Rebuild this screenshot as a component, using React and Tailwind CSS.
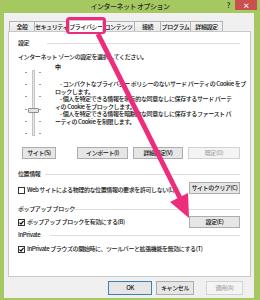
import React from "react";

function Header({ label, labelClass }) {
  return (
    <div className="flex items-center h-[8px] whitespace-nowrap">
      <div className={labelClass}>{label}</div>
      <div className="flex-1 h-px bg-[#dcdcdc]" />
    </div>
  );
}

function Check({ checked }) {
  return (
    <div className="w-[7px] h-[7px] border border-[#333] bg-white flex items-center justify-center shrink-0">
      {checked && (
        <svg width="5" height="5" viewBox="0 0 5 5">
          <path d="M0.5 2.6 L2 4 L4.6 0.8" fill="none" stroke="#111" strokeWidth="1.2" />
        </svg>
      )}
    </div>
  );
}

function Btn({ children, className, disabled, primary }) {
  const border = primary ? "border-[#3c7fb1]" : disabled ? "border-[#d2d2d2]" : "border-[#adadad]";
  const bg = disabled ? "bg-[#f4f4f4]" : "bg-[#e6e6e6]";
  const color = disabled ? "text-[#a8a8a8]" : "text-[#111]";
  return (
    <div className={`${className} ${border} ${bg} ${color} border flex items-center justify-center whitespace-nowrap shrink-0`}>
      {children}
    </div>
  );
}

function Tab({ label, className, active }) {
  if (active) {
    return (
      <div className={`${className} h-[12px] bg-white border border-b-0 border-[#c8c8c8] relative z-10 mb-[-1px] flex items-center justify-center whitespace-nowrap overflow-hidden`}>
        {label}
      </div>
    );
  }
  return (
    <div className={`${className} h-[10px] bg-linear-to-b from-[#f4f4f4] to-[#e9e9e9] border border-b-0 border-[#b4b4b4] -ml-px flex items-center justify-center whitespace-nowrap overflow-hidden`}>
      {label}
    </div>
  );
}

function CheckRow({ checked, label }) {
  return (
    <div className="flex items-center h-[8px] gap-[2px] whitespace-nowrap">
      <Check checked={checked} />
      <span>{label}</span>
    </div>
  );
}

export default function App() {
  const ticks = [0, 1, 2, 3, 4, 5];
  return (
    <div className="relative w-[260px] h-[300px] bg-[#a5c860] flex flex-col overflow-hidden font-['Noto_Sans_CJK_JP','Noto_Sans',sans-serif] font-medium text-[6px] leading-[8px] tracking-[-0.4px] text-[#111]">
      {/* title bar */}
      <div className="h-[13px] grid grid-cols-[1fr_auto_1fr] shrink-0">
        <div />
        <div className="text-[7px] leading-[13px] tracking-[-0.5px] text-[#2b2b2b] whitespace-nowrap">
          インターネット オプション
        </div>
        <div className="flex justify-end items-start pr-[3px]">
          <span className="text-[7px] leading-[11px] font-bold text-[#333] mr-[5px]">?</span>
          <div className="w-[22px] h-[10px] bg-[#c9504f] flex items-center justify-center text-white text-[7px] leading-[10px] font-bold">
            ×
          </div>
        </div>
      </div>

      {/* client area */}
      <div className="flex-1 ml-[4px] mr-[6px] mb-[2px] bg-[#f0f0f0] flex flex-col pl-[4px] pr-[3px]">
        {/* tabs */}
        <div className="mt-[6px] h-[12px] flex items-end pl-[2px]">
          <Tab label="全般" className="w-[26px]" />
          <Tab label="セキュリティ" className="w-[35px]" />
          <Tab label="プライバシー" className="w-[34px]" active />
          <Tab label="コンテンツ" className="w-[33px]" />
          <Tab label="接続" className="w-[27px]" />
          <Tab label="プログラム" className="w-[31px]" />
          <Tab label="詳細設定" className="w-[33px]" />
        </div>

        {/* panel */}
        <div className="h-[246px] border border-[#c8c8c8] bg-white flex flex-col pl-[9px] pr-[10px]">
          <div className="mt-[7px]">
            <Header label="設定" labelClass="w-[29px]" />
          </div>
          <div className="mt-[6px] h-[8px] whitespace-nowrap">インターネット ゾーンの設定を選択してください。</div>

          {/* slider + description */}
          <div className="mt-[2px] flex">
            <div className="w-[37px] shrink-0 pt-[7px] pl-[7px] flex">
              <div className="h-[66px] py-[2px] flex flex-col justify-between">
                {ticks.map((t) => (
                  <div key={t} className="w-[2px] h-px bg-[#9a9a9a]" />
                ))}
              </div>
              <div className="ml-[5px] w-[3px] h-[66px] border border-[#c4c4c4] bg-[#e8e8e8] relative">
                <div className="absolute left-[-5px] top-[37px] w-[11px] h-[5px] bg-[#e2e2e2] border border-[#8f8f8f] rounded-[1px]" />
              </div>
              <div className="ml-[4px] h-[66px] py-[2px] flex flex-col justify-between">
                {ticks.map((t) => (
                  <div key={t} className="w-[2px] h-px bg-[#9a9a9a]" />
                ))}
              </div>
            </div>
            <div className="flex flex-col whitespace-nowrap">
              <div className="h-[8px] font-bold">中</div>
              <div className="mt-[9px] leading-[7.6px]">
                <div className="pl-[5px]">- コンパクトなプライバシー ポリシーのないサード パーティの Cookie をブ</div>
                <div>ロックします。</div>
                <div className="pl-[5px]">- 個人を特定できる情報を明示的な同意なしに保存するサード パーテ</div>
                <div>ィの Cookie をブロックします。</div>
                <div className="pl-[5px]">- 個人を特定できる情報を暗黙的な同意なしに保存するファースト パ</div>
                <div>ーティの Cookie を制限します。</div>
              </div>
            </div>
          </div>

          {/* buttons row */}
          <div className="mt-[11px] h-[12px] flex">
            <Btn className="ml-[4px] w-[34px] h-[12px]">サイト(S)</Btn>
            <Btn className="ml-[21px] w-[51px] h-[12px]">インポート(I)</Btn>
            <Btn className="ml-[5px] w-[50px] h-[12px]">詳細設定(V)</Btn>
            <Btn className="ml-[5px] w-[52px] h-[12px]" disabled>既定(D)</Btn>
          </div>

          <div className="mt-[11px]">
            <Header label="位置情報" labelClass="w-[27px]" />
          </div>
          <div className="mt-[4px] h-[12px] flex justify-between">
            <div className="mt-[4px]">
              <CheckRow label="Web サイトによる物理的な位置情報の要求を許可しない(L)" />
            </div>
            <Btn className="w-[51px] h-[12px]">サイトのクリア(C)</Btn>
          </div>

          <div className="mt-[11px]">
            <Header label="ポップアップ ブロック" labelClass="w-[48px]" />
          </div>
          <div className="mt-[3px] h-[12px] flex justify-between">
            <div className="mt-[2px]">
              <CheckRow checked label="ポップアップ ブロックを有効にする(B)" />
            </div>
            <Btn className="w-[51px] h-[12px]">設定(E)</Btn>
          </div>

          <div className="mt-[3px]">
            <Header label="InPrivate" labelClass="w-[32px]" />
          </div>
          <div className="mt-[6px]">
            <CheckRow checked label="InPrivate ブラウズの開始時に、ツールバーと拡張機能を無効にする(T)" />
          </div>
        </div>

        {/* dialog buttons */}
        <div className="mt-[4px] h-[14px] flex justify-end pr-[8px]">
          <Btn className="w-[44px] h-[14px]" primary>OK</Btn>
          <Btn className="ml-[4px] w-[38px] h-[14px]">キャンセル</Btn>
          <Btn className="ml-[12px] w-[37px] h-[14px]" disabled>適用(A)</Btn>
        </div>
      </div>

      {/* annotation overlay */}
      <svg className="absolute left-0 top-0 pointer-events-none" width="260" height="300" viewBox="0 0 260 300">
        <rect x="67.5" y="18.5" width="37" height="14" rx="2" fill="none" stroke="#ee2c7c" strokeWidth="3" />
        <line x1="98" y1="34" x2="181" y2="200" stroke="#ee2c7c" strokeWidth="5" />
        <polygon points="189,218 188,193 170,202" fill="#ee2c7c" />
      </svg>
    </div>
  );
}
